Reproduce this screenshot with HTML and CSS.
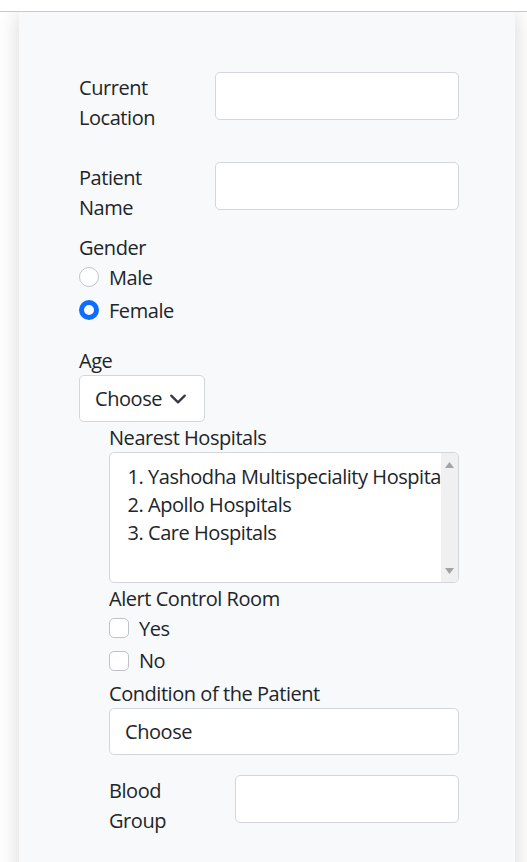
FILE: index.html
```html
<!DOCTYPE html>
<html>
<head>
<meta charset="utf-8">
<link rel="stylesheet" href="styles.css">
</head>
<body>
<div class="topbar"></div>
<main class="card">
  <div class="row row-a">
    <label class="lbl">Current Location</label>
    <div class="input"></div>
  </div>
  <div class="row row-b">
    <label class="lbl">Patient Name</label>
    <div class="input"></div>
  </div>
  <div class="lbl gender-lbl">Gender</div>
  <div class="check"><span class="radio"></span><span>Male</span></div>
  <div class="check check-last"><span class="radio on"></span><span>Female</span></div>
  <div class="lbl">Age</div>
  <div class="select">
    <span>Choose</span>
    <svg class="chev" viewBox="0 0 16 16" width="18" height="18"><path d="m2 5 6 6 6-6" fill="none" stroke="#343a40" stroke-width="2" stroke-linecap="round" stroke-linejoin="round"/></svg>
  </div>
  <section class="indent">
    <div class="lbl">Nearest Hospitals</div>
    <div class="listbox">
      <ol class="hosp">
        <li>Yashodha Multispeciality Hospitals</li>
        <li>Apollo Hospitals</li>
        <li>Care Hospitals</li>
      </ol>
      <div class="sbar">
        <svg width="9" height="6" viewBox="0 0 9 6"><path d="M4.5 0 9 6H0z" fill="#a3a3a3"/></svg>
        <svg width="9" height="6" viewBox="0 0 9 6"><path d="M0 0h9L4.5 6z" fill="#a3a3a3"/></svg>
      </div>
    </div>
    <div class="lbl">Alert Control Room</div>
    <div class="check"><span class="box"></span><span>Yes</span></div>
    <div class="check"><span class="box"></span><span>No</span></div>
    <div class="lbl">Condition of the Patient</div>
    <div class="input wide"><span>Choose</span></div>
    <div class="row row-c">
      <label class="lbl">Blood Group</label>
      <div class="input"></div>
    </div>
  </section>
</main>
</body>
</html>
```
FILE: styles.css
```css
* { box-sizing: border-box; }
html, body { margin: 0; padding: 0; background: #fff; }
body {
  font-family: "Segoe UI", "Open Sans", sans-serif;
  font-size: 20px;
  line-height: 30px;
  letter-spacing: -0.45px;
  color: #212529;
  overflow: hidden;
  height: 862px;
}
.topbar {
  position: relative;
  z-index: 1;
  height: 12px;
  background: #fff;
  border-bottom: 1px solid #c8c9cc;
}
.card {
  margin: 0 12px 0 19px;
  background: #f8f9fa;
  box-shadow: 0 0 22px rgba(0,0,0,0.16);
  padding: 60px 56px 40px 60px;
  min-height: 900px;
}
.row { display: grid; align-items: start; }
.row-a, .row-b { grid-template-columns: 136px 1fr; }
.row-a { margin-bottom: 30px; }
.row-c { grid-template-columns: 126px 1fr; margin-top: 20px; }
.lbl { display: block; padding-top: 1px; margin-bottom: -1px; }
.row .lbl { width: 80px; }
.input {
  height: 48px;
  background: #fff;
  border: 1px solid #d3d7dc;
  border-radius: 5px;
  display: flex;
  align-items: center;
  padding: 0 15px;
}
.gender-lbl { margin-top: 10px; }
.check { display: flex; align-items: center; gap: 10px; height: 30px; margin-bottom: 3px; padding-top: 1px; }
.check-last { margin-bottom: 20px; }
.indent .check { margin-bottom: 2.5px; }
.radio {
  width: 20px; height: 20px; border-radius: 50%;
  border: 1px solid #bfc3c8; background: #fff;
  margin-top: -1px;
}
.radio.on {
  border: 5px solid #0d6efd; background: #fff;
}
.box {
  width: 20px; height: 20px; border-radius: 5px;
  border: 1px solid #bfc3c8; background: #fff;
  margin-top: -1px;
}
.select {
  width: 126px; height: 47px;
  background: #fff; border: 1px solid #d3d7dc; border-radius: 5px;
  display: flex; align-items: center; justify-content: space-between;
  padding: 0 17px 0 15px;
}
.chev { display: block; }
.indent { margin-left: 30px; }
.listbox {
  height: 131px;
  margin-top: -1px;
  background: #fff;
  border: 1px solid #d3d7dc;
  border-radius: 5px;
  display: flex;
  overflow: hidden;
}
.hosp {
  flex: 1;
  margin: 0;
  padding: 10px 0 0 38px;
  line-height: 28px;
  white-space: nowrap;
  overflow: hidden;
}
.sbar {
  width: 17px;
  background: #f0f0f0;
  display: flex;
  flex-direction: column;
  justify-content: space-between;
  align-items: center;
  padding: 9px 0 8px;
}
.sbar svg { display: block; }
.wide { height: 47px; }
```
